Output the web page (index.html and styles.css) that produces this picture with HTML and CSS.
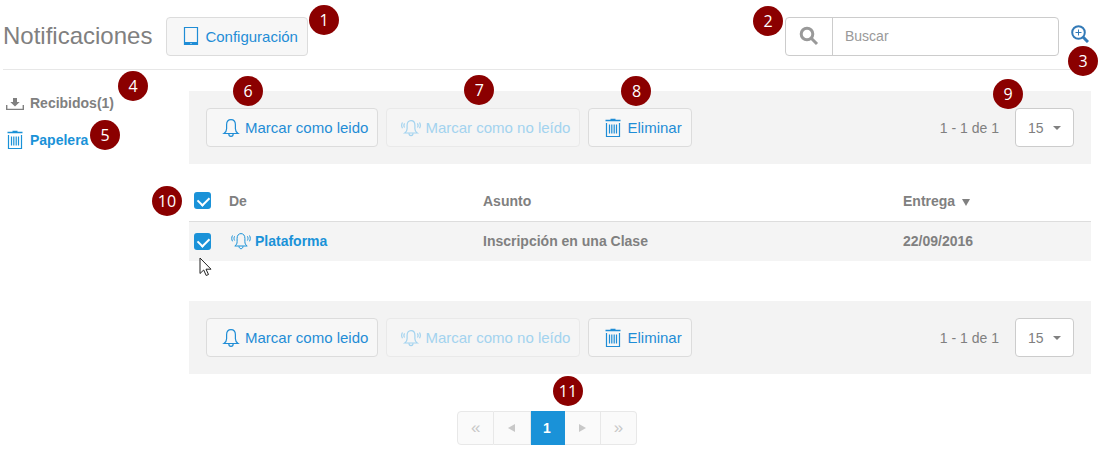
FILE: index.html
```html
<!DOCTYPE html>
<html lang="es">
<head>
    <meta charset="UTF-8">
    <meta name="viewport" content="width=device-width, initial-scale=1.0">
    <title>Notificaciones</title>
    <link rel="stylesheet" href="styles.css">
</head>
<body>
    <!-- shared icons -->
    <svg class="sprite" aria-hidden="true">
        <symbol id="bell" viewBox="0 0 20 20">
            <path d="M3 15.500c1.800-1.300 2.600-2.500 2.600-4.800V6.700C5.600 3.700 7.300 1.600 10 1.600s4.400 2.100 4.400 5.100v4c0 2.300.8 3.500 2.600 4.800z"/>
            <path d="M7.800 15.800c0 1.500.9 2.600 2.200 2.600s2.200-1.100 2.200-2.600"/>
        </symbol>
        <symbol id="ringing" viewBox="0 0 20 20">
            <path d="M3.800 15c1.700-1.200 2.300-2.300 2.300-4.300V7.300C6.100 4.500 7.600 2.600 10 2.600s3.900 1.900 3.900 4.700v3.400c0 2 .6 3.100 2.300 4.300z"/>
            <path d="M8 15.300c0 1.400.8 2.400 2 2.400s2-1 2-2.400M3.600 5.300c-.8 1.200-.8 3 0 4.200M1.500 4.500c-1 1.700-1 4.100 0 5.800M16.400 5.300c.8 1.200.8 3 0 4.200M18.500 4.500c1 1.700 1 4.100 0 5.800"/>
        </symbol>
        <symbol id="trash" viewBox="0 0 20 20">
            <path d="M2.500 2.500h15M7.500 1.500h5" stroke-width="1.600"/>
            <path d="M3.500 5v13.500h13V5M6.500 6.500v9M8.800 6.500v9M11.200 6.500v9M13.500 6.500v9"/>
        </symbol>
    </svg>

    <header class="header">
        <h1>Notificaciones</h1>
        <div class="marked">
            <button type="button" class="btn">
                <svg class="icon" viewBox="0 0 20 20"><path d="M3.500 1.500h13v17h-13z"/><path d="M3 18h6M11 18h6M3 16.800h14" stroke-width="1.500"/></svg>
                Configuración
            </button>
            <span class="badge badge-config">1</span>
        </div>
        <form class="search marked">
            <label for="buscar" aria-label="Buscar">
                <svg viewBox="0 0 20 20"><circle cx="8" cy="8" r="5.800"/><path d="M12.500 12.500l5.500 5.500"/></svg>
            </label>
            <input type="text" id="buscar" placeholder="Buscar">
            <span class="badge badge-search">2</span>
        </form>
        <div class="marked">
            <a href="#" class="advanced" aria-label="Búsqueda avanzada">
                <svg viewBox="0 0 18 18"><circle cx="7.500" cy="7.500" r="6.300"/><path d="M12 12l5 5" stroke-width="3"/><path d="M4.500 7.500h6M7.500 4.500v6" stroke-width="1"/></svg>
            </a>
            <span class="badge badge-advanced">3</span>
        </div>
    </header>

    <div class="layout">
        <ul class="folders">
            <li class="marked">
                <a href="#" class="current">
                    <svg class="icon" viewBox="0 0 20 20"><path d="M1.700 12v4.400h16.600V12" stroke-width="1.400"/><path class="solid" d="M8 5h4v4h2.700L10 13.600 5.300 9H8z"/></svg>
                    Recibidos(1)
                </a>
                <span class="badge badge-inbox">4</span>
            </li>
            <li class="marked">
                <a href="#">
                    <svg class="icon"><use href="#trash"/></svg>
                    Papelera
                </a>
                <span class="badge badge-bin">5</span>
            </li>
        </ul>

        <main>
            <div class="toolbar">
                <div class="marked">
                    <button type="button" class="btn"><svg class="icon"><use href="#bell"/></svg>Marcar como leido</button>
                    <span class="badge badge-action">6</span>
                </div>
                <div class="marked">
                    <button type="button" class="btn" disabled><svg class="icon"><use href="#ringing"/></svg>Marcar como no leído</button>
                    <span class="badge badge-unread">7</span>
                </div>
                <div class="marked">
                    <button type="button" class="btn"><svg class="icon"><use href="#trash"/></svg>Eliminar</button>
                    <span class="badge badge-delete">8</span>
                </div>
                <span class="range">1 - 1 de 1</span>
                <div class="page-size marked">
                    <select aria-label="Resultados por página">
                        <option>15</option>
                        <option>30</option>
                    </select>
                    <span class="badge badge-size">9</span>
                </div>
            </div>

            <table class="messages">
                <thead>
                    <tr>
                        <th class="check">
                            <div class="marked">
                                <input type="checkbox" aria-label="Seleccionar todo" checked>
                                <span class="badge badge-check">10</span>
                            </div>
                        </th>
                        <th class="from">De</th>
                        <th class="subject">Asunto</th>
                        <th>Entrega <span class="sort"></span></th>
                    </tr>
                </thead>
                <tbody>
                    <tr>
                        <td class="check">
                            <div class="marked">
                                <input type="checkbox" aria-label="Seleccionar mensaje" checked>
                                <svg class="pointer" viewBox="0 0 13 20"><path d="M1 1v15.500l3.700-3.500 2.500 5.500 2.300-1-2.500-5.300H12z"/></svg>
                            </div>
                        </td>
                        <td><a href="#"><svg class="icon"><use href="#ringing"/></svg>Plataforma</a></td>
                        <td>Inscripción en una Clase</td>
                        <td>22/09/2016</td>
                    </tr>
                </tbody>
            </table>

            <div class="toolbar">
                <button type="button" class="btn"><svg class="icon"><use href="#bell"/></svg>Marcar como leido</button>
                <button type="button" class="btn" disabled><svg class="icon"><use href="#ringing"/></svg>Marcar como no leído</button>
                <button type="button" class="btn"><svg class="icon"><use href="#trash"/></svg>Eliminar</button>
                <span class="range">1 - 1 de 1</span>
                <div class="page-size">
                    <select aria-label="Resultados por página">
                        <option>15</option>
                        <option>30</option>
                    </select>
                </div>
            </div>
        </main>
    </div>

    <nav class="pagination marked" aria-label="Paginación">
        <button type="button" disabled>«</button>
        <button type="button" aria-label="Anterior" disabled><span class="prev"></span></button>
        <button type="button" class="active">1</button>
        <button type="button" aria-label="Siguiente" disabled><span class="next"></span></button>
        <button type="button" class="last" disabled>»</button>
        <span class="badge badge-pages">11</span>
    </nav>
</body>
</html>
```
FILE: styles.css
```css
* {
    box-sizing: border-box;
}
body {
    margin: 0;
    padding: 0 12px 18px 3px;
    font-family: "Liberation Sans", Arial, sans-serif;
    font-size: 14px;
    line-height: 20px;
    color: #808080;
    background: #fff;
}
a {
    color: #1a92d8;
    text-decoration: none;
}
svg {
    fill: none;
    stroke: currentColor;
}
.sprite {
    display: none;
}
.icon {
    width: 20px;
    height: 20px;
    flex: none;
    stroke-width: 1.2;
}
.solid {
    fill: currentColor;
    stroke: none;
}
.marked {
    position: relative;
}

/* header */
.header {
    display: flex;
    align-items: center;
    padding: 16px 0 13px;
    border-bottom: 1px solid #e7e7e7;
}
h1 {
    margin: 0 14px 0 0;
    font-size: 24px;
    line-height: 40px;
    font-weight: normal;
}
.btn {
    display: flex;
    align-items: center;
    gap: 4px;
    height: 39px;
    padding: 0 9px 0 14px;
    border: 1px solid #dcdcdc;
    border-radius: 4px;
    background: #f7f7f7;
    color: #1f8dd6;
    font-family: inherit;
    font-size: 15px;
    white-space: nowrap;
}
.btn:disabled {
    border-color: #e9e9e9;
    background: #f5f5f5;
    color: #a3d3ef;
}
.search {
    display: flex;
    width: 274px;
    height: 39px;
    margin: 0 12px 0 auto;
    border: 1px solid #ccc;
    border-radius: 4px;
}
.search label {
    display: flex;
    align-items: center;
    justify-content: center;
    width: 47px;
    border-right: 1px solid #ccc;
    color: #999;
}
.search label svg {
    width: 20px;
    height: 20px;
    stroke-width: 3;
}
.search input {
    flex: 1;
    min-width: 0;
    padding: 0 12px;
    border: 0;
    background: none;
    font-family: inherit;
    font-size: 14px;
    color: #808080;
}
.search input::placeholder {
    color: #999;
}
.advanced {
    display: block;
    margin: 0 2px 4px 0;
    color: #337ab7;
}
.advanced svg {
    display: block;
    width: 18px;
    height: 18px;
    stroke-width: 2;
}

/* columns */
.layout {
    display: grid;
    grid-template-columns: 186px 1fr;
    padding-top: 21px;
}
.folders {
    margin: 0;
    padding: 2px 0 0 2px;
    list-style: none;
    font-weight: bold;
}
.folders li {
    margin-bottom: 17px;
}
.folders a {
    display: flex;
    align-items: center;
    gap: 5px;
}
.folders .current {
    color: #808080;
}

/* toolbar */
.toolbar {
    display: flex;
    align-items: center;
    gap: 8px;
    padding: 17px;
    background: #f3f3f3;
}
.range {
    margin: 0 8px 0 auto;
}
.page-size {
    position: relative;
}
.page-size select {
    display: block;
    width: 59px;
    height: 39px;
    padding: 0 12px;
    border: 1px solid #ccc;
    border-radius: 4px;
    appearance: none;
    background: #fff;
    color: #808080;
    font-family: inherit;
    font-size: 14px;
}
.page-size::after {
    content: "";
    position: absolute;
    right: 13px;
    top: 18px;
    border: 4px solid transparent;
    border-top-color: #808080;
    border-bottom: 0;
    pointer-events: none;
}

/* messages */
.messages {
    width: 100%;
    margin: 15px 0 40px;
    border-collapse: collapse;
    table-layout: fixed;
    font-weight: bold;
}
.messages th,
.messages td {
    height: 40px;
    padding: 0;
    text-align: left;
}
.messages th {
    height: 42px;
    padding-top: 2px;
    border-bottom: 1px solid #ddd;
}
.messages td {
    background: #f4f4f4;
}
.messages .check {
    width: 40px;
    padding-left: 5px;
}
.messages .from {
    width: 254px;
}
.messages .subject {
    width: 420px;
}
.messages a {
    display: flex;
    align-items: center;
    gap: 4px;
    margin-left: 2px;
}
.messages .icon {
    stroke-width: 1;
}
.messages input {
    display: block;
    position: relative;
    width: 17px;
    height: 17px;
    margin: 0;
    border-radius: 3px;
    appearance: none;
    background: #1a92d8;
}
.messages input:checked::after {
    content: "";
    position: absolute;
    left: 4px;
    top: 4px;
    width: 9px;
    height: 6px;
    border: solid #fff;
    border-width: 0 0 2px 2px;
    transform: rotate(-45deg);
}
.sort {
    display: inline-block;
    margin-left: 3px;
    border: 4px solid transparent;
    border-top: 7px solid #808080;
    border-bottom: 0;
}
.pointer {
    position: absolute;
    left: 5px;
    top: 24px;
    width: 13px;
    height: 20px;
    fill: #fff;
    stroke: #222;
    z-index: 1;
}

/* pagination */
.pagination {
    display: flex;
    width: 180px;
    height: 34px;
    margin: 37px auto 0;
}
.pagination button {
    display: flex;
    flex: 1;
    align-items: center;
    justify-content: center;
    padding: 0;
    border: 1px solid #e8e8e8;
    border-left-width: 0;
    background: #fafafa;
    color: #c8c8c8;
    font-family: inherit;
    font-size: 17px;
}
.pagination button:first-child {
    border-left-width: 1px;
    border-radius: 4px 0 0 4px;
}
.pagination .last {
    border-radius: 0 4px 4px 0;
}
.pagination .active {
    flex: 0 0 34px;
    border-color: #1a92d8;
    background: #1a92d8;
    color: #fff;
    font-size: 14px;
    font-weight: bold;
}
.prev,
.next {
    border: 4px solid transparent;
}
.prev {
    border-right: 7px solid #c8c8c8;
    border-left: 0;
}
.next {
    border-left: 7px solid #c8c8c8;
    border-right: 0;
}

/* numbered callouts */
.badge {
    position: absolute;
    width: 30px;
    height: 30px;
    border-radius: 50%;
    background: #8b0000;
    color: #fff;
    font: 16px/30px "Open Sans", sans-serif;
    text-align: center;
    z-index: 2;
}
.badge-config {
    right: -31px;
    top: -12px;
}
.badge-search {
    left: -33px;
    top: -12px;
}
.badge-advanced {
    left: -3px;
    top: 21px;
}
.badge-inbox {
    left: 113px;
    top: -22px;
}
.badge-bin {
    left: 85px;
    top: -10px;
}
.badge-action {
    left: 27px;
    top: -32px;
}
.badge-unread {
    left: 78px;
    top: -33px;
}
.badge-delete {
    left: 33px;
    top: -32px;
}
.badge-size {
    left: -22px;
    top: -29px;
}
.badge-check {
    left: -42px;
    top: -6px;
}
.badge-pages {
    left: 96px;
    top: -35px;
}
```
